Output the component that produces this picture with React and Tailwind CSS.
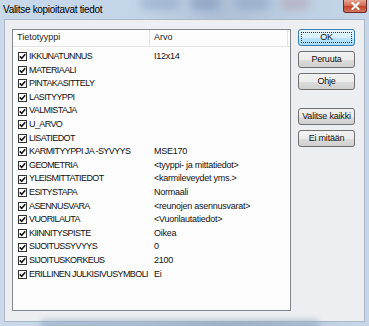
import React from "react";

const rows = [
  ["IKKUNATUNNUS", "I12x14"],
  ["MATERIAALI", ""],
  ["PINTAKASITTELY", ""],
  ["LASITYYPPI", ""],
  ["VALMISTAJA", ""],
  ["U_ARVO", ""],
  ["LISATIEDOT", ""],
  ["KARMITYYPPI JA -SYVYYS", "MSE170"],
  ["GEOMETRIA", "<tyyppi- ja mittatiedot>"],
  ["YLEISMITTATIEDOT", "<karmileveydet yms.>"],
  ["ESITYSTAPA", "Normaali"],
  ["ASENNUSVARA", "<reunojen asennusvarat>"],
  ["VUORILAUTA", "<Vuorilautatiedot>"],
  ["KIINNITYSPISTE", "Oikea"],
  ["SIJOITUSSYVYYS", "0"],
  ["SIJOITUSKORKEUS", "2100"],
  ["ERILLINEN JULKISIVUSYMBOLI", "Ei"],
];

function Check() {
  return (
    <span className="flex h-[9px] w-[9px] shrink-0 items-center justify-center border border-[#333] bg-white">
      <svg width="7" height="7" viewBox="0 0 7 7">
        <path d="M0.8 3.4 L2.7 5.4 L6.2 1.2" fill="none" stroke="#111" strokeWidth="1.6" />
      </svg>
    </span>
  );
}

function Btn({ children, primary, className = "" }) {
  return (
    <div
      className={
        "flex h-[17px] w-[57px] items-center justify-center rounded-[3px] border text-[9px] tracking-[-0.2px] text-[#111] " +
        (primary
          ? "border-[#3c7fb1] bg-[linear-gradient(#eaf6fd_0%,#d9f0fc_50%,#bee6fd_51%,#a7d9f5_100%)] p-[2px] "
          : "border-[#707070] bg-[linear-gradient(#f2f2f2_0%,#ebebeb_50%,#dddddd_51%,#cfcfcf_100%)] ") +
        className
      }
    >
      {primary ? (
        <span className="flex h-full w-full items-center justify-center border border-dotted border-[#333]">{children}</span>
      ) : (
        children
      )}
    </div>
  );
}

export default function App() {
  return (
    <div
      className="relative h-[326px] w-[369px] overflow-hidden bg-[linear-gradient(90deg,#c9d9ea_0%,#c2d4e8_40%,#aebfd6_60%,#bccfe3_80%,#c6d6e8_100%)]"
      style={{ fontFamily: '"Liberation Sans", Arial, sans-serif' }}
    >
      {/* blurry glass blobs */}
      <div className="absolute left-[140px] top-[-4px] h-[14px] w-[40px] rounded-full bg-[#8fa6c4] opacity-60 blur-[4px]" />
      <div className="absolute left-[190px] top-[-4px] h-[14px] w-[30px] rounded-full bg-[#7b95b8] opacity-60 blur-[4px]" />
      <div className="absolute left-[235px] top-[-4px] h-[14px] w-[35px] rounded-full bg-[#8aa3c2] opacity-60 blur-[4px]" />
      <div className="absolute left-[280px] top-[-4px] h-[14px] w-[30px] rounded-full bg-[#b39ca8] opacity-50 blur-[4px]" />
      <div className="absolute left-[40px] top-[320px] h-[10px] w-[280px] rounded-full bg-[#8ea3bd] opacity-60 blur-[3px]" />

      <div className="relative flex h-[19px] items-start">
        <span className="pl-[3px] pt-[4px] text-[10px] leading-[11px] tracking-[-0.3px] text-[#000]">
          Valitse kopioitavat tiedot
        </span>
      </div>
      {/* close button */}
      <div className="absolute right-[2px] top-0 flex h-[13px] w-[24px] items-center justify-center rounded-b-[3px] border border-t-0 border-[#6b2a2a] bg-[linear-gradient(#e8a493_0%,#d0705a_45%,#c2432b_55%,#d5785c_100%)]">
        <svg width="9" height="8" viewBox="0 0 9 8">
          <path d="M1.5 1 L7.5 7 M7.5 1 L1.5 7" stroke="#fff" strokeWidth="2" strokeLinecap="square" />
        </svg>
      </div>

      <div className="mx-[4px] flex h-[303px] gap-[7px] border border-[#aab8c8] bg-[#eceef1] pl-[7px] pr-[7px] pt-[9px]">
        {/* list */}
        <div className="flex h-[282px] w-[279px] flex-col border border-[#828790] bg-[#fdfdfd]">
          <div className="flex h-[17px] border-b border-[#e5e5e5] text-[9px] text-[#1e1e1e]">
            <div className="flex w-[137px] items-center border-r border-[#e3e3e3] pl-[4px]">Tietotyyppi</div>
            <div className="flex w-[138px] items-center border-r border-[#e3e3e3] pl-[4px]">Arvo</div>
          </div>
          <div className="flex flex-col pt-[3px]">
            {rows.map(([k, v]) => (
              <div key={k} className="flex h-[13.6px] items-center text-[9px] text-[#111]">
                <div className="flex w-[141px] items-center gap-[2px] pl-[5px]">
                  <Check />
                  <span className="whitespace-nowrap tracking-[-0.6px]">{k}</span>
                </div>
                <span className="whitespace-nowrap tracking-[-0.25px]">{v}</span>
              </div>
            ))}
          </div>
        </div>
        {/* buttons */}
        <div className="flex flex-col gap-[5px]">
          <Btn primary>OK</Btn>
          <Btn>Peruuta</Btn>
          <Btn>Ohje</Btn>
          <Btn className="mt-[13px]">Valitse kaikki</Btn>
          <Btn>Ei mitään</Btn>
        </div>
      </div>
    </div>
  );
}
